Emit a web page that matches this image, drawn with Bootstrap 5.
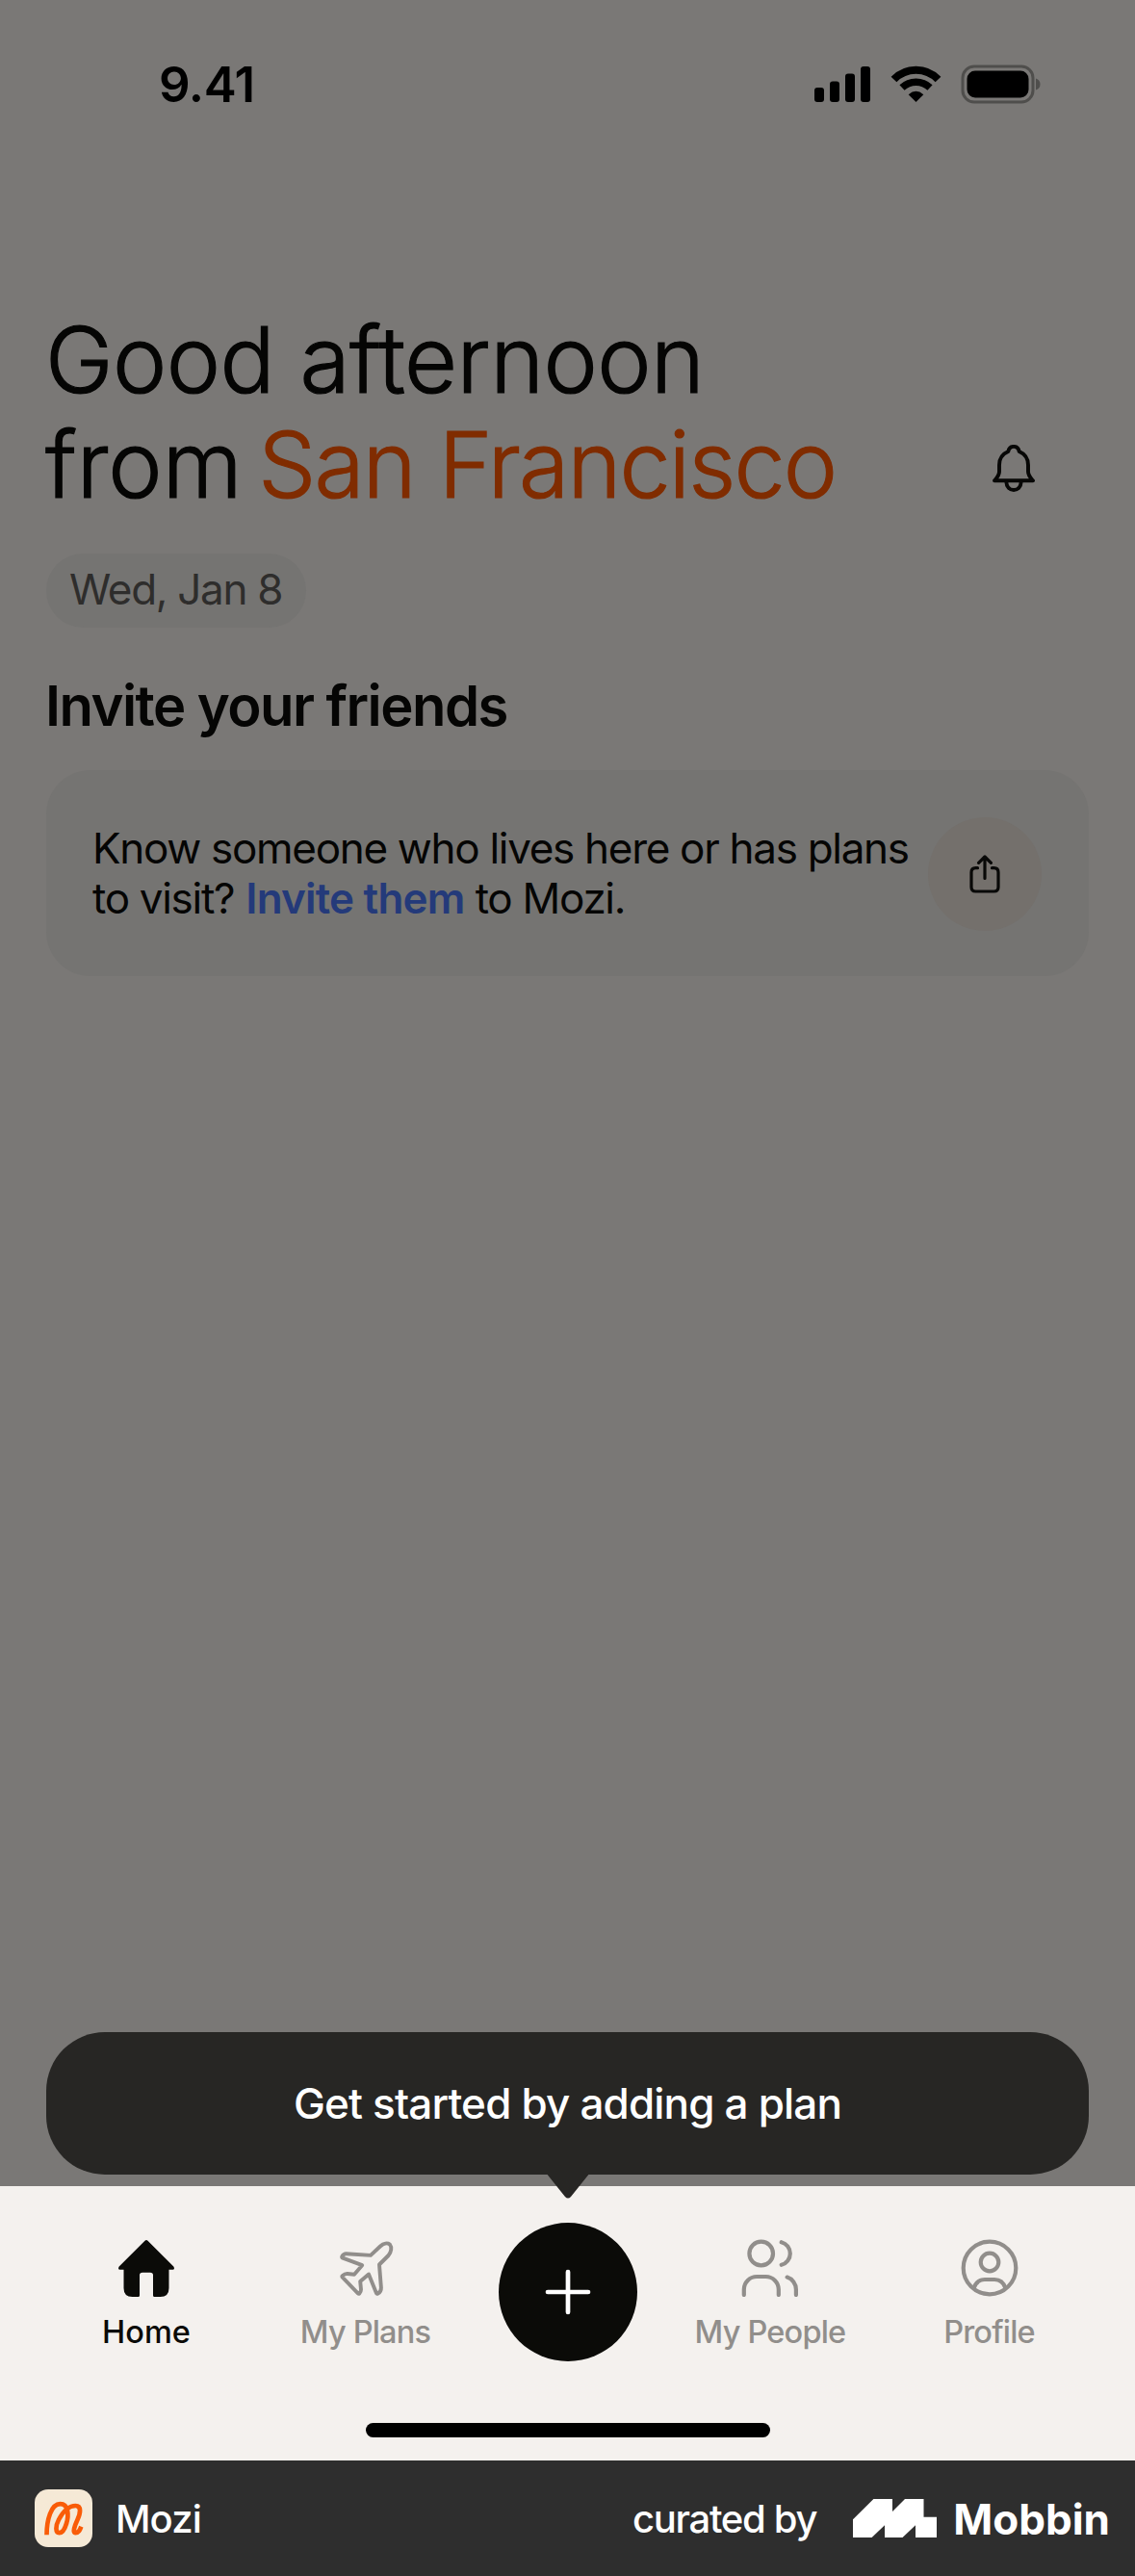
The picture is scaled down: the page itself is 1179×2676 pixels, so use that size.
<!DOCTYPE html>
<html lang="en">
<head>
<meta charset="utf-8">
<meta name="viewport" content="width=device-width, initial-scale=1">
<title>Mozi</title>
<link href="https://cdn.jsdelivr.net/npm/bootstrap@5.3.0/dist/css/bootstrap.min.css" rel="stylesheet">
<style>
  body { font-family: Inter, "Liberation Sans", sans-serif; background: #7a7876; color: #050504; height: 2676px; }
  svg { display: block; flex: none; }
  .status-bar { height: 174px; padding: 67px 98px 0 165px; }
  .clock { font-size: 51px; font-weight: 600; line-height: 41px; letter-spacing: -.4px; color: #000; }
  .greeting { padding: 145px 104px 0 48px; }
  .greeting h1 { font-size: 95px; font-weight: 300; line-height: 109px; letter-spacing: -.55px; margin: 0 0 0 -1px; -webkit-text-stroke: 1.2px currentColor; }
  .from-word { letter-spacing: 0; word-spacing: -10px; }
  .city { color: #802c00; letter-spacing: -1.8px; }
  .bell-btn { margin-bottom: 26px; }
  .date-pill { height: 77px; width: 270px; margin: 38px 0 0 48px; border-radius: 39px; background: #757472; color: #2e2d2c; font-size: 44px; font-weight: 400; letter-spacing: -1.3px; line-height: 75px; padding-left: 24px; }
  .section-title { font-size: 58px; font-weight: 600; line-height: 70px; letter-spacing: -1.55px; margin: 46px 0 0 47px; }
  .invite-card { margin: 32px 48px 0; height: 214px; border-radius: 46px; background: #757472; padding: 0 49px 0 48px; }
  .invite-copy { font-size: 44px; line-height: 52px; font-weight: 400; letter-spacing: -1.3px; white-space: nowrap; }
  .invite-copy a { color: #243a7a; font-weight: 600; letter-spacing: -.8px; margin-left: 1px; }
  .share-btn { width: 118px; height: 118px; background: #74706c; position: relative; top: 1px; }
  .hint { height: 148px; margin: 0 48px 12px; border-radius: 61px; background: #272624; color: #fff; font-size: 44px; font-weight: 500; letter-spacing: -.82px; line-height: 148px; }
  .hint-arrow { left: 50%; top: 147px; transform: translateX(-50%); z-index: 2; }
  .tab-area { height: 285px; background: #f4f1ee; }
  .tab-grid { display: grid; grid-template-columns: 228px 227px 193px 228px 227px; padding: 38px 38px 0; height: 246px; align-items: start; }
  .tab-item { display: flex; flex-direction: column; align-items: center; gap: 17px; padding-top: 17px; font-size: 32.5px; font-weight: 500; line-height: 40px; letter-spacing: -.8px; color: #918e8b; text-decoration: none; }
  .tab-item.current { color: #0b0b08; letter-spacing: 0; }
  .add-btn { width: 144px; height: 144px; background: #0b0b08; }
  .home-bar { width: 420px; height: 15px; border-radius: 8px; background: #000; }
  .credit { height: 120px; background: #2e2e2e; color: #fff; padding: 0 26px 0 36px; font-size: 40px; font-weight: 500; line-height: 48px; }
  .credit span { padding-top: 2px; }
  .app-name { margin-left: 24px; letter-spacing: -.9px; }
  .curated { letter-spacing: -1.3px; margin-right: 38px; }
  .brand-name { font-size: 44px; font-weight: 700; margin-left: 17px; letter-spacing: 0; }
</style>
</head>
<body class="d-flex flex-column overflow-hidden">
  <header class="status-bar d-flex justify-content-between align-items-start">
    <div class="clock">9.41</div>
    <svg width="236" height="41" viewBox="0 0 236 41">
      <g>
        <rect x="1" y="24" width="10" height="15" rx="3"/><rect x="17" y="17.500" width="10" height="21.500" rx="3"/>
        <rect x="33" y="9.500" width="10" height="29.500" rx="3"/><rect x="49" y="2" width="10" height="37" rx="3"/>
      </g>
      <g fill="none" stroke="#000" stroke-width="8">
        <path d="M83.500 15.500A32 32 0 0 1 129.500 15.500"/>
        <path stroke-width="7.500" d="M92 24A21 21 0 0 1 121 24"/>
      </g>
      <path d="M106.500 39L98.700 31.200Q106.500 24.500 114.300 31.200Z"/>
      <rect x="155" y="2" width="73" height="37" rx="12" fill="none" stroke="#4f4e4c" stroke-width="3"/>
      <rect x="159.500" y="6.500" width="64" height="28" rx="8.500"/>
      <path d="M231 14.500Q235.500 16 235.500 20.500T231 26.500Z" fill="#4f4e4c"/>
    </svg>
  </header>

  <section class="greeting d-flex justify-content-between align-items-end">
    <h1>Good afternoon<br><span class="from-word">from </span><span class="city">San Francisco</span></h1>
    <svg class="bell-btn" width="44" height="49" viewBox="0 0 44 49" fill="none" stroke="#070706" stroke-width="3.900" stroke-linecap="round" stroke-linejoin="round">
      <path d="M16.300 7C17 3.500 19 1.900 22 1.900S27 3.500 27.700 7C33.500 9.500 37 14.500 37 21V28C37 32 39.500 34.500 42 37.300H2C4.500 34.500 7 32 7 28V21C7 14.500 10.500 9.500 16.300 7Z"/>
      <path d="M14.300 38.500C14.500 43.500 17.700 47 22 47S29.500 43.500 29.700 38.500"/>
    </svg>
  </section>

  <div class="date-pill">Wed, Jan 8</div>

  <h2 class="section-title">Invite your friends</h2>
  <div class="invite-card d-flex align-items-center justify-content-between">
    <div class="invite-copy">Know someone who lives here or has plans<br>to visit? <a href="#" class="text-decoration-none">Invite them</a> to Mozi.</div>
    <div class="share-btn rounded-circle d-flex align-items-center justify-content-center flex-shrink-0">
      <svg width="32" height="40" viewBox="0 0 32 40" fill="none" stroke="#090908" stroke-width="3.200" stroke-linecap="round" stroke-linejoin="round">
        <path d="M16 24.500V2M9.600 8.400L16 2L22.400 8.400M8.500 13.700H6.500Q2 13.700 2 18.200V33.500Q2 38 6.500 38H25.500Q30 38 30 33.500V18.200Q30 13.700 25.500 13.700H23.500"/>
      </svg>
    </div>
  </div>

  <div class="hint position-relative text-center mt-auto">Get started by adding a plan
    <svg class="hint-arrow position-absolute" width="44" height="26" viewBox="0 0 44 26"><path d="M0 0H44V1H43.400L25 24Q22 27 19 24L.6 1H0Z" fill="#272624"/></svg>
  </div>

  <nav class="tab-area flex-shrink-0">
    <div class="tab-grid">
      <a href="#" class="tab-item current">
        <svg width="60" height="60" viewBox="0 0 60 60"><path fill="currentColor" d="M28.500 1.700Q30 .3 31.500 1.700L58.300 28.500Q60 31.500 57.500 31.700H53.500V51Q53.500 60 44.500 60H38.500Q37 60 37 58.500V37.500Q37 34.700 34 34.700H26Q23 34.700 23 37.500V58.500Q23 60 21.500 60H15.500Q6.500 60 6.500 51V31.700H2.500Q0 31.500 1.700 28.500Z"/></svg>
        Home</a>
      <a href="#" class="tab-item">
        <svg width="60" height="60" viewBox="0 0 60 60" fill="none" stroke="currentColor" stroke-width="3.900" stroke-linejoin="round"><path d="M9.600 15.200L35 16.900L45 7.500C48.500 4.200 52.500 3.800 55 5.600C57.300 8.500 56.500 13.500 53.500 17L44 26.500L45.900 50.500C46 53 44.500 55.500 42.500 56.700Q41.300 57.200 40.700 55.500L33 36.500L24.200 44L25 52.500C25 54.500 24.300 55.500 23.300 56.500Q22.500 57 21.800 56.300L5.700 39.700Q5 38.800 5.900 38C7.500 36.500 8.500 35.800 11 36L18 36.700L26.200 27.200L6 19.700Q4.700 19 5.300 18C6.400 16.200 7.800 15.100 9.600 15.200Z"/></svg>
        My Plans</a>
      <a href="#" class="add-btn rounded-circle d-flex align-items-center justify-content-center mx-auto">
        <svg width="50" height="50" viewBox="0 0 50 50" stroke="#fff" stroke-width="4.700" stroke-linecap="round"><path d="M25 4V46M4 25H46"/></svg>
      </a>
      <a href="#" class="tab-item">
        <svg width="60" height="60" viewBox="0 0 60 60" fill="none" stroke="currentColor" stroke-width="4.200" stroke-linecap="round"><circle cx="20.700" cy="15" r="12.300"/><path d="M41.700 3.200A12.200 12.200 0 0 1 41.700 26.800M2.800 58V52.300A13.300 13.300 0 0 1 16.100 39H25.500A13.300 13.300 0 0 1 38.800 52.300V58M47.600 39.600A13.300 13.300 0 0 1 56.900 52.300V58"/></svg>
        My People</a>
      <a href="#" class="tab-item">
        <svg width="60" height="60" viewBox="0 0 60 60" fill="none" stroke="currentColor" stroke-width="4.200"><circle cx="30" cy="30" r="27.300"/><circle cx="30" cy="24" r="9.300"/><path d="M13.500 51C15.500 45 19.500 42 25 42H35C40.500 42 44.500 45 46.500 51"/></svg>
        Profile</a>
    </div>
    <div class="home-bar mx-auto"></div>
  </nav>

  <footer class="credit d-flex align-items-center flex-shrink-0">
    <svg width="60" height="60" viewBox="0 0 60 60"><rect width="60" height="60" rx="14" fill="#f5e9d6"/><path d="M12.500 47.300C12.500 32 17 15.200 26.500 15.200C35.500 15.200 35.500 27 33 35.500C30.500 44 28 45.200 25.500 45.200C21.500 45.200 21.500 38 25 31.500C29 24 35 17 42.500 17C49 17 47.500 25 44.500 31.500C41.500 38 39 45.200 42.500 45.200C46 45.200 47 42 48.300 38.700" fill="none" stroke="#f95c08" stroke-width="4.700"/></svg>
    <span class="app-name me-auto">Mozi</span>
    <span class="curated">curated by</span>
    <svg width="87" height="40" viewBox="0 0 87 40" fill="#fff"><path d="M0 21.300L21.400 0H41V13L54 0H73.500V18.700H87V40H65V27.300L51.500 40H33V27.300L19.600 40H0Z"/></svg>
    <span class="brand-name">Mobbin</span>
  </footer>
</body>
</html>
